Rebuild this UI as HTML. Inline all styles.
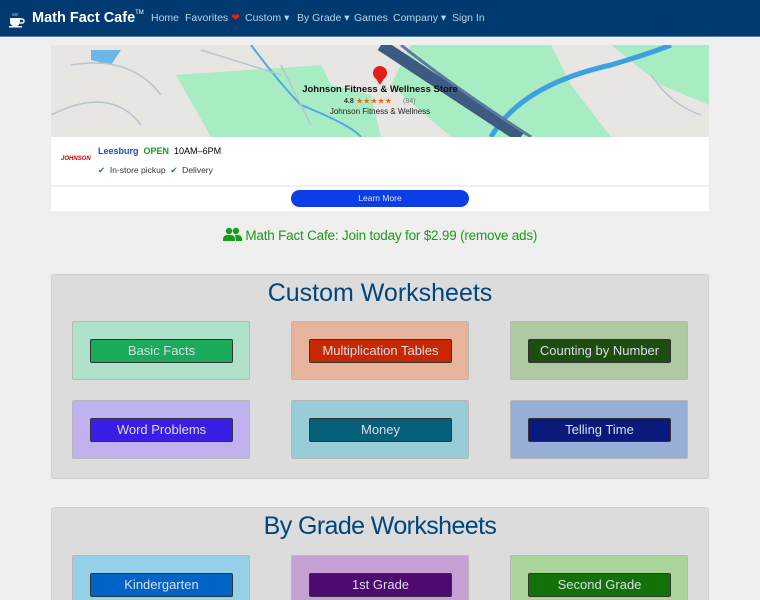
<!DOCTYPE html>
<html><head><style>
*{box-sizing:border-box;margin:0;padding:0}
html,body{width:760px;height:600px;overflow:hidden}
body{background:#efefef;font-family:"Liberation Sans",sans-serif;position:relative}
.nav{position:absolute;left:0;top:0;width:760px;height:37px;background:#003a70;border-bottom:1px solid #5a7fa0}
.nav .brand{position:absolute;left:32px;top:10px;color:#fff;font-weight:bold;font-size:14.5px}
.nav .brand sup{font-size:6px;font-weight:normal;vertical-align:top;position:relative;top:0px}
.nav a{position:absolute;top:12px;color:#b7d3ea;font-size:10.5px}
.ad{position:absolute;left:51px;top:45px;width:658px;height:166px;background:#fff}
.panel{position:absolute;left:51px;width:658px;background:#dcdcdc;border:1px solid #d0d0d0;border-radius:3px}
.panel h2{text-align:center;color:#00457c;font-weight:normal;font-size:25px;font-family:"Liberation Sans",sans-serif}
.card{position:absolute;width:178px;height:59px;border:1px solid #b8b8b8;border-radius:2px}
.card div{position:absolute;left:17px;top:17px;width:143px;height:24px;border:1px solid #333;border-radius:2px;color:#dde;font-size:13px;text-align:center;line-height:22px}
</style></head><body>
<div class="nav">
<svg style="position:absolute;left:9px;top:12px" width="16" height="16" viewBox="0 0 16 16"><path d="M1 6h10v4a4 4 0 0 1-4 4H5a4 4 0 0 1-4-4z" fill="#fff"/><path d="M11 7h2a2 2 0 0 1 0 4h-2" stroke="#fff" stroke-width="1.5" fill="none"/><path d="M4 1v3M6 1v3M8 1v3" stroke="#ccc" stroke-width=".7"/><rect x="0" y="14" width="13" height="1.5" fill="#fff"/></svg>
<div class="brand">Math Fact Cafe<sup>TM</sup></div>
<a style="left:151px">Home</a><a style="left:185px">Favorites <span style="color:#e0201b">&#10084;</span></a>
<a style="left:245px">Custom &#9662;</a><a style="left:297px">By Grade &#9662;</a><a style="left:354px">Games</a><a style="left:393px">Company &#9662;</a><a style="left:452px">Sign In</a>
</div>
<div class="ad">
<svg width="658" height="92" style="position:absolute;left:0;top:0"><rect width="658" height="92" fill="#e8e6e3"/>
<path d="M125 30 L160 92 L330 92 L320 50 L280 40 L270 20 Z" fill="#a8ecc4"/>
<path d="M360 0 L500 0 L520 40 L560 92 L400 92 L340 40 Z" fill="#a8ecc4"/>
<path d="M560 0 L658 0 L658 60 L610 40 Z" fill="#a8ecc4"/>
<path d="M40 5 L70 5 L60 20 L40 15 Z" fill="#6ab8e8"/>
<path d="M200 0 Q230 40 250 60 Q300 80 310 92" stroke="#4fa8e0" stroke-width="2" fill="none"/>
<path d="M440 92 Q470 40 560 20 Q600 8 620 0" stroke="#3ea0e0" stroke-width="5" fill="none"/>
<path d="M330 0 L470 92" stroke="#3d5a80" stroke-width="12"/>
<path d="M350 0 Q400 40 480 92" stroke="#5a7aa0" stroke-width="3" fill="none"/>
<path d="M0 70 Q60 40 90 80 M20 20 Q80 10 110 50 M150 5 L230 30 M230 20 L260 80 M600 30 Q620 60 650 70" stroke="#b8c4d0" stroke-width="1.5" fill="none"/>
<circle cx="329" cy="28" r="7" fill="#e0201b"/><path d="M324 32 L329 40 L334 32Z" fill="#e0201b"/>
<text x="329" y="47" text-anchor="middle" font-size="9.5" font-weight="bold" fill="#111" font-family="Liberation Sans">Johnson Fitness &amp; Wellness Store</text>
<text x="293" y="58" font-size="7" fill="#333" font-weight="bold" font-family="Liberation Sans">4.8</text>
<text x="305" y="58.5" font-size="8" fill="#e86a10" font-family="DejaVu Sans">★★★★★</text><text x="352" y="58" font-size="7" fill="#777" font-family="Liberation Sans">(84)</text>
<text x="329" y="69" text-anchor="middle" font-size="8" fill="#222" font-family="Liberation Sans">Johnson Fitness &amp; Wellness</text>
</svg>
<div style="position:absolute;left:10px;top:111px;font-size:6px;color:#c00;font-weight:bold;font-style:italic">JOHNSON</div>
<div style="position:absolute;left:47px;top:101px;font-size:9px"><b style="color:#1a4bd8">Leesburg</b> <b style="color:#189a2a">&nbsp;OPEN</b> &nbsp;10AM–6PM</div>
<div style="position:absolute;left:47px;top:120px;font-size:8.5px;color:#333"><span style="color:#188a2a">✔</span> &nbsp;In-store pickup &nbsp;<span style="color:#188a2a">✔</span> &nbsp;Delivery</div>
<div style="position:absolute;left:0;top:140px;width:658px;height:2px;background:#f0f0f0"></div>
<div style="position:absolute;left:240px;top:145px;width:178px;height:17px;border-radius:9px;background:#0b3ee6;color:#dfe6ff;font-size:8.5px;text-align:center;line-height:17px">Learn More</div>
</div>
<div style="position:absolute;left:0;top:227px;width:760px;text-align:center;color:#179c17;font-size:13.5px;letter-spacing:-0.2px"><svg width="19" height="14" viewBox="0 0 19 14" style="vertical-align:-1px"><circle cx="6" cy="4" r="3.2" fill="#179c17"/><circle cx="13" cy="4" r="3.2" fill="#179c17"/><path d="M0 14v-2a4 4 0 0 1 4-4h4a4 4 0 0 1 4 4v2zM12 8h3a4 4 0 0 1 4 4v2h-6z" fill="#179c17"/></svg> Math Fact Cafe: Join today for $2.99 (remove ads)</div>

<div class="panel" style="top:274px;height:205px"><h2 style="margin-top:4px">Custom Worksheets</h2>
<div class="card" style="left:20px;top:46px;background:#b0e2cb"><div style="background:#1aab5a">Basic Facts</div></div>
<div class="card" style="left:239px;top:46px;background:#e6b49a"><div style="background:#c82800">Multiplication Tables</div></div>
<div class="card" style="left:458px;top:46px;background:#b0c8a2"><div style="background:#1d4e0f">Counting by Number</div></div>
<div class="card" style="left:20px;top:125px;background:#bfb2ee"><div style="background:#3a1ee8">Word Problems</div></div>
<div class="card" style="left:239px;top:125px;background:#98ccd6"><div style="background:#055f78">Money</div></div>
<div class="card" style="left:458px;top:125px;background:#97aed6"><div style="background:#0a1a7a">Telling Time</div></div>
</div>
<div class="panel" style="top:507px;height:120px"><h2 style="margin-top:4px;letter-spacing:-0.6px">By Grade Worksheets</h2>
<div class="card" style="left:20px;top:47px;background:#96d0e8"><div style="background:#0063c6">Kindergarten</div></div>
<div class="card" style="left:239px;top:47px;background:#c6a0d2"><div style="background:#4e0a70">1st Grade</div></div>
<div class="card" style="left:458px;top:47px;background:#a9d49a"><div style="background:#137206">Second Grade</div></div>
</div>
</body></html>
